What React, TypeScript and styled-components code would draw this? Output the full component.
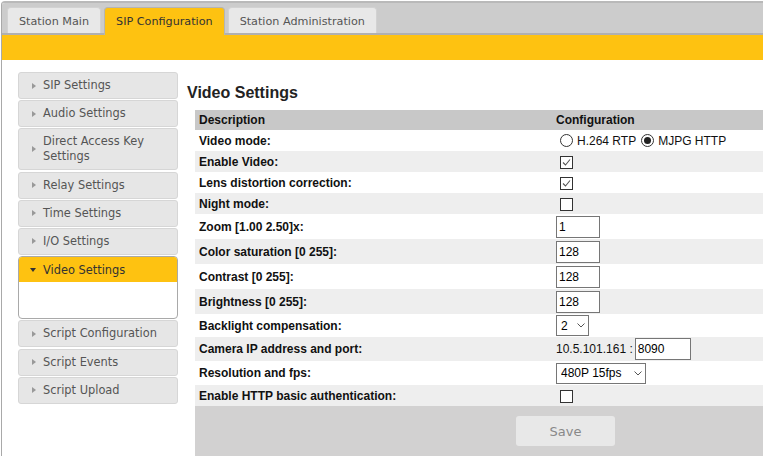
import { createGlobalStyle, styled } from "styled-components"

const GlobalStyle = createGlobalStyle`
  html, body {
    margin: 0;
    padding: 0;
    overflow: hidden;
    background: #fff;
  }
  body {
    font-family: "DejaVu Sans", Verdana, sans-serif;
  }
`

const YELLOW = "#fec211"

const Frame = styled.div`
  margin: 1px 0 0 1px;
  min-height: calc(100vh - 3px);
  border-top: 2px solid #b9b9b9;
  border-left: 1px solid #a9a9a9;
  border-top-left-radius: 4px;
  overflow: hidden;
`

const TabBar = styled.nav`
  display: flex;
  align-items: flex-end;
  gap: 3px;
  height: 26px;
  padding: 4px 0 0 5px;
  background: #cccccc;
  border-bottom: 2px solid #b0b0b0;
`

const Tab = styled.div<{ $active?: boolean }>`
  box-sizing: border-box;
  display: flex;
  align-items: center;
  height: ${p => (p.$active ? 28 : 26)}px;
  margin-bottom: ${p => (p.$active ? -2 : 0)}px;
  padding: ${p => (p.$active ? "2px 11px 2px 11px" : "2px 11px 0 11px")};
  border: 1px solid ${p => (p.$active ? "#b5b5b5" : "#d2d2d2")};
  border-bottom: none;
  border-radius: 4px 4px 0 0;
  background: ${p => (p.$active ? YELLOW : "#e8e8e8")};
  color: ${p => (p.$active ? "#333" : "#555")};
  font-size: 11.2px;
  white-space: nowrap;
`

const YellowBar = styled.div`
  height: 25px;
  background: ${YELLOW};
`

const Content = styled.div`
  display: flex;
  align-items: flex-start;
`

const Sidebar = styled.aside`
  flex: none;
  width: 160px;
  margin: 12px 0 0 16px;
  display: flex;
  flex-direction: column;
  gap: 1.2px;
`

const SideItem = styled.div`
  box-sizing: border-box;
  display: flex;
  align-items: center;
  min-height: 27px;
  padding: 5px 6px 5px 11px;
  border: 1px solid #d6d6d6;
  border-radius: 3px;
  background: #e6e6e6;
  color: #555;
  font-size: 11.4px;
  line-height: 15px;
`

const Group = styled.div`
  border: 1px solid #a9a9a9;
  border-radius: 4px;
  overflow: hidden;
  background: #fff;
`

const GroupHead = styled.div`
  display: flex;
  align-items: center;
  height: 25px;
  padding: 0 6px 0 11px;
  background: ${YELLOW};
  color: #333;
  font-size: 11.4px;
`

const GroupBody = styled.div`
  height: 36px;
`

const ArrowSlot = styled.span`
  flex: none;
  width: 13px;
  display: flex;
  align-items: center;
`

const Arrow = styled.span<{ $open?: boolean }>`
  width: 0;
  height: 0;
  ${p =>
    p.$open
      ? `border-top: 4px solid #333;
         border-left: 3.5px solid transparent;
         border-right: 3.5px solid transparent;`
      : `margin-left: 2px;
         border-left: 4px solid #999;
         border-top: 3.5px solid transparent;
         border-bottom: 3.5px solid transparent;`}
`

const Main = styled.main`
  flex: none;
  padding: 23px 0 0 9px;
`

const Title = styled.h2`
  margin: 0 0 7px;
  font: bold 16px/20px "Liberation Sans", Arial, sans-serif;
  color: #222;
`

const Table = styled.table`
  margin-left: 8px;
  width: 741px;
  border-collapse: collapse;
  table-layout: fixed;
  font-family: "Liberation Sans", Arial, sans-serif;
  font-size: 12px;
  color: #111;
`

const Th = styled.th`
  height: 20px;
  padding: 0 4px;
  background: #c8c8c8;
  text-align: left;
  font-weight: bold;
`

const Row = styled.tr<{ $alt: boolean; $h: number }>`
  height: ${p => p.$h}px;
  background: ${p => (p.$alt ? "#eeeeee" : "#ffffff")};
`

const Label = styled.td`
  padding: 0 4px;
  font-weight: bold;
  vertical-align: middle;
`

const Control = styled.td`
  padding: 0 4px;
  vertical-align: middle;
  white-space: nowrap;
`

const Box = styled.span`
  box-sizing: border-box;
  display: inline-flex;
  width: 13px;
  height: 13px;
  margin-left: 4px;
  border: 1px solid #333;
  background: #fff;
  vertical-align: middle;
`

const RadioSet = styled.span`
  display: inline-flex;
  align-items: center;
  gap: 5px;
  margin-left: 4px;
`

const RadioLabel = styled.label`
  display: inline-flex;
  align-items: center;
  gap: 4px;
`

const RadioDot = styled.span<{ $on?: boolean }>`
  box-sizing: border-box;
  display: inline-flex;
  align-items: center;
  justify-content: center;
  width: 13px;
  height: 13px;
  border: 1px solid #333;
  border-radius: 50%;
  background: #fff;
  &::after {
    content: "";
    width: 7px;
    height: 7px;
    border-radius: 50%;
    background: ${p => (p.$on ? "#222" : "transparent")};
  }
`

const TextBox = styled.input<{ $w: number }>`
  box-sizing: border-box;
  width: ${p => p.$w}px;
  height: 22px;
  padding: 0 2px;
  border: 1px solid #767676;
  border-radius: 0;
  font: 12px "Liberation Sans", Arial, sans-serif;
  color: #000;
  vertical-align: middle;
  outline: none;
`

const SelectWrap = styled.span`
  position: relative;
  display: inline-block;
  vertical-align: middle;
`

const Select = styled.select<{ $w: number }>`
  appearance: none;
  box-sizing: border-box;
  width: ${p => p.$w}px;
  height: 21px;
  padding: 0 0 0 4px;
  border: 1px solid #767676;
  border-radius: 0;
  background: #fff;
  font: 12px "Liberation Sans", Arial, sans-serif;
  color: #000;
  outline: none;
  display: block;
`

const Chevron = styled.svg`
  position: absolute;
  right: 4px;
  top: 8px;
  pointer-events: none;
`

const IpText = styled.span`
  vertical-align: middle;
  margin-right: 2px;
`

const Footer = styled.td`
  height: 50px;
  padding: 0;
  background: #d2d1d1;
  text-align: center;
  vertical-align: middle;
`

const SaveButton = styled.button`
  width: 99px;
  height: 30px;
  border: none;
  border-radius: 3px;
  background: #e8e8e8;
  color: #888;
  font: 13px "DejaVu Sans", Verdana, sans-serif;
`

function Check({ on }: { on?: boolean }) {
  return (
    <Box>
      {on && (
        <svg width="11" height="11" viewBox="0 0 11 11">
          <polyline points="2,5.5 4.5,8 9,2.5" fill="none" stroke="#555" strokeWidth="1.1" />
        </svg>
      )}
    </Box>
  )
}

function Dropdown({ w, value }: { w: number; value: string }) {
  return (
    <SelectWrap>
      <Select $w={w} value={value} onChange={() => {}}>
        <option>{value}</option>
      </Select>
      <Chevron width="8" height="5" viewBox="0 0 8 5">
        <polyline points="0.5,0.5 4,4 7.5,0.5" fill="none" stroke="#555" strokeWidth="1" />
      </Chevron>
    </SelectWrap>
  )
}

const sideTop = ["SIP Settings", "Audio Settings", "Direct Access Key Settings", "Relay Settings", "Time Settings", "I/O Settings"]
const sideBottom = ["Script Configuration", "Script Events", "Script Upload"]

const rows: { label: string; h: number; control: React.ReactNode }[] = [
  {
    label: "Video mode:",
    h: 21,
    control: (
      <RadioSet>
        <RadioLabel><RadioDot />H.264 RTP</RadioLabel>
        <RadioLabel><RadioDot $on />MJPG HTTP</RadioLabel>
      </RadioSet>
    ),
  },
  { label: "Enable Video:", h: 21, control: <Check on /> },
  { label: "Lens distortion correction:", h: 21, control: <Check on /> },
  { label: "Night mode:", h: 21, control: <Check /> },
  { label: "Zoom [1.00 2.50]x:", h: 25, control: <TextBox $w={44} defaultValue="1" /> },
  { label: "Color saturation [0 255]:", h: 25, control: <TextBox $w={44} defaultValue="128" /> },
  { label: "Contrast [0 255]:", h: 25, control: <TextBox $w={44} defaultValue="128" /> },
  { label: "Brightness [0 255]:", h: 25, control: <TextBox $w={44} defaultValue="128" /> },
  { label: "Backlight compensation:", h: 23, control: <Dropdown w={33} value="2" /> },
  {
    label: "Camera IP address and port:",
    h: 24,
    control: (
      <>
        <IpText>10.5.101.161 :</IpText>
        <TextBox $w={56} defaultValue="8090" />
      </>
    ),
  },
  { label: "Resolution and fps:", h: 24, control: <Dropdown w={90} value="480P 15fps" /> },
  { label: "Enable HTTP basic authentication:", h: 21, control: <Check /> },
]

export default function App() {
  return (
    <>
      <GlobalStyle />
      <Frame>
        <TabBar>
          <Tab>Station Main</Tab>
          <Tab $active>SIP Configuration</Tab>
          <Tab>Station Administration</Tab>
        </TabBar>
        <YellowBar />
        <Content>
          <Sidebar>
            {sideTop.map(s => (
              <SideItem key={s}>
                <ArrowSlot><Arrow /></ArrowSlot>
                <span>{s}</span>
              </SideItem>
            ))}
            <Group>
              <GroupHead>
                <ArrowSlot><Arrow $open /></ArrowSlot>
                <span>Video Settings</span>
              </GroupHead>
              <GroupBody />
            </Group>
            {sideBottom.map(s => (
              <SideItem key={s}>
                <ArrowSlot><Arrow /></ArrowSlot>
                <span>{s}</span>
              </SideItem>
            ))}
          </Sidebar>
          <Main>
            <Title>Video Settings</Title>
            <Table>
              <colgroup>
                <col style={{ width: 357 }} />
                <col />
              </colgroup>
              <thead>
                <tr>
                  <Th>Description</Th>
                  <Th>Configuration</Th>
                </tr>
              </thead>
              <tbody>
                {rows.map((r, i) => (
                  <Row key={r.label} $alt={i % 2 === 1} $h={r.h}>
                    <Label>{r.label}</Label>
                    <Control>{r.control}</Control>
                  </Row>
                ))}
                <tr>
                  <Footer colSpan={2}>
                    <SaveButton>Save</SaveButton>
                  </Footer>
                </tr>
              </tbody>
            </Table>
          </Main>
        </Content>
      </Frame>
    </>
  )
}
